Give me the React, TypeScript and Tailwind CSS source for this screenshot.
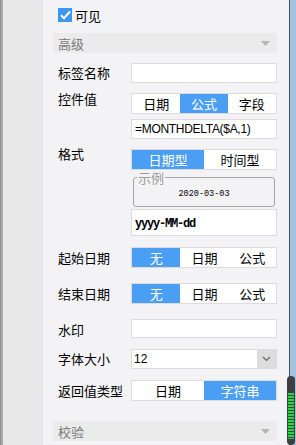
import type { ReactNode } from 'react';

const FONT = { fontFamily: '"Noto Sans CJK SC", "Noto Sans", sans-serif' };

function Label({ children, className = '' }: { children: ReactNode; className?: string }) {
  return <div className={'w-[73px] shrink-0 text-[13px] leading-[16px] text-black ' + className}>{children}</div>;
}

function Segmented({ items, active, widths }: { items: string[]; active: number; widths: string[] }) {
  return (
    <div className="flex h-[21px] w-[146px] border border-[#dcdcdd] bg-white">
      {items.map((it, i) => (
        <div
          key={it}
          className={[
            'flex items-center justify-center text-[13px] leading-none',
            widths[i],
            i === active ? 'bg-[#4a9ff5] text-white' : 'text-black',
          ].join(' ')}
        >
          {it}
        </div>
      ))}
    </div>
  );
}

function Section({ title }: { title: string }) {
  return (
    <div className="flex h-[20px] w-[224px] items-center justify-between bg-[#ebebeb] pl-[5px] pr-[7px]">
      <span className="text-[13px] leading-none text-[#7a7a7a]">{title}</span>
      <svg width="9" height="5" viewBox="0 0 9 5">
        <path d="M0 0h9L4.5 5z" fill="#b5b5b5" />
      </svg>
    </div>
  );
}

export default function App() {
  return (
    <div className="relative flex h-[445px] w-[296px] overflow-hidden bg-[#f3f3f5]" style={FONT}>
      <div className="w-[3px] bg-gradient-to-r from-[#8e8e8e] to-[#b4b4b4]" />
      <div className="w-[40px] bg-[#e8e8e8]" />

      <div className="flex w-[246px] flex-col pl-[10px]">
        <div className="mt-[8px] flex items-center pl-[5px]">
          <div className="flex h-[14px] w-[14px] items-center justify-center bg-[#3d97f0]">
            <svg width="11" height="10" viewBox="0 0 11 10">
              <path d="M1 5.2l3 3L10 1.5" stroke="white" strokeWidth="2" fill="none" />
            </svg>
          </div>
          <span className="ml-[3px] text-[13px] leading-none text-black">可见</span>
        </div>

        <div className="mt-[11px]">
          <Section title="高级" />
        </div>

        <div className="mt-[10px] flex items-center pl-[5px]">
          <Label>标签名称</Label>
          <div className="h-[20px] w-[146px] border border-[#dcdcdd] bg-white" />
        </div>

        <div className="mt-[10px] flex items-start pl-[5px]">
          <Label className="-mt-[2px]">控件值</Label>
          <div className="flex flex-col">
            <Segmented items={['日期', '公式', '字段']} active={1} widths={['w-[49px]', 'w-[48px]', 'w-[49px]']} />
            <div
              className="mt-[5px] flex h-[20px] w-[146px] items-center border border-[#dcdcdd] bg-white pl-[3px] text-[12px] tracking-[-0.3px] text-black"
              style={{ fontFamily: '"Liberation Sans", Arial, sans-serif' }}
            >
              =MONTHDELTA($A,1)
            </div>
          </div>
        </div>

        <div className="mt-[10px] flex items-start pl-[5px]">
          <Label className="mt-[-3px]">格式</Label>
          <div className="flex flex-col">
            <Segmented items={['日期型', '时间型']} active={0} widths={['w-[73px]', 'w-[73px]']} />
            <fieldset className="mx-[2px] mt-[1px] h-[36px] rounded-[3px] border border-[#a7a7a7] px-[3px]">
              <legend className="px-[1px] text-[13px] leading-[13px] text-[#9a9a9a]">示例</legend>
              <div
                className="mt-[5px] text-center text-[8.5px] leading-[10px] text-black"
                style={{ fontFamily: '"Liberation Mono", monospace' }}
              >
                2020-03-03
              </div>
            </fieldset>
            <div
              className="mt-[2px] flex h-[27px] w-[146px] items-center border border-[#dcdcdd] bg-white pl-[3px] pt-[2px] text-[12px] font-bold tracking-[-1.2px] text-black"
              style={{ fontFamily: '"Liberation Mono", monospace' }}
            >
              yyyy-MM-dd
            </div>
          </div>
        </div>

        <div className="mt-[11px] flex items-center pl-[5px]">
          <Label>起始日期</Label>
          <Segmented items={['无', '日期', '公式']} active={0} widths={['w-[49px]', 'w-[49px]', 'w-[48px]']} />
        </div>

        <div className="mt-[15px] flex items-center pl-[5px]">
          <Label>结束日期</Label>
          <Segmented items={['无', '日期', '公式']} active={0} widths={['w-[49px]', 'w-[49px]', 'w-[48px]']} />
        </div>

        <div className="mt-[14px] flex items-center pl-[5px]">
          <Label className="mt-[4px]">水印</Label>
          <div className="h-[19px] w-[146px] border border-[#dcdcdd] bg-white" />
        </div>

        <div className="mt-[11px] flex items-center pl-[5px]">
          <Label>字体大小</Label>
          <div className="flex h-[20px] w-[146px] border border-[#dcdcdd] bg-white">
            <div
              className="flex flex-1 items-center pl-[2px] text-[12px] text-black"
              style={{ fontFamily: '"Liberation Sans", Arial, sans-serif' }}
            >
              12
            </div>
            <div className="flex w-[19px] items-center justify-center bg-[#dcdcdd]">
              <svg width="9" height="6" viewBox="0 0 9 6">
                <path d="M1 1l3.5 3.5L8 1" stroke="#666" strokeWidth="1.2" fill="none" />
              </svg>
            </div>
          </div>
        </div>

        <div className="mt-[11px] flex items-center pl-[5px]">
          <Label>返回值类型</Label>
          <Segmented items={['日期', '字符串']} active={1} widths={['w-[73px]', 'w-[73px]']} />
        </div>

        <div className="mt-[20px]">
          <Section title="校验" />
        </div>
      </div>

      <div className="w-[1px] bg-[#4d4d4d]" />
      <div className="w-[6px] bg-[#a3c2e2]" />

      <div className="absolute left-[287px] top-[376px] flex h-[69px] w-[8px] flex-col items-center rounded-[4px] bg-[#3b3f45] pt-[17px]">
        <div className="h-[46px] w-[6px] bg-[repeating-linear-gradient(to_bottom,#2fd14a_0px,#2fd14a_2px,#1f5a2a_2px,#1f5a2a_3px)]" />
      </div>
    </div>
  );
}
